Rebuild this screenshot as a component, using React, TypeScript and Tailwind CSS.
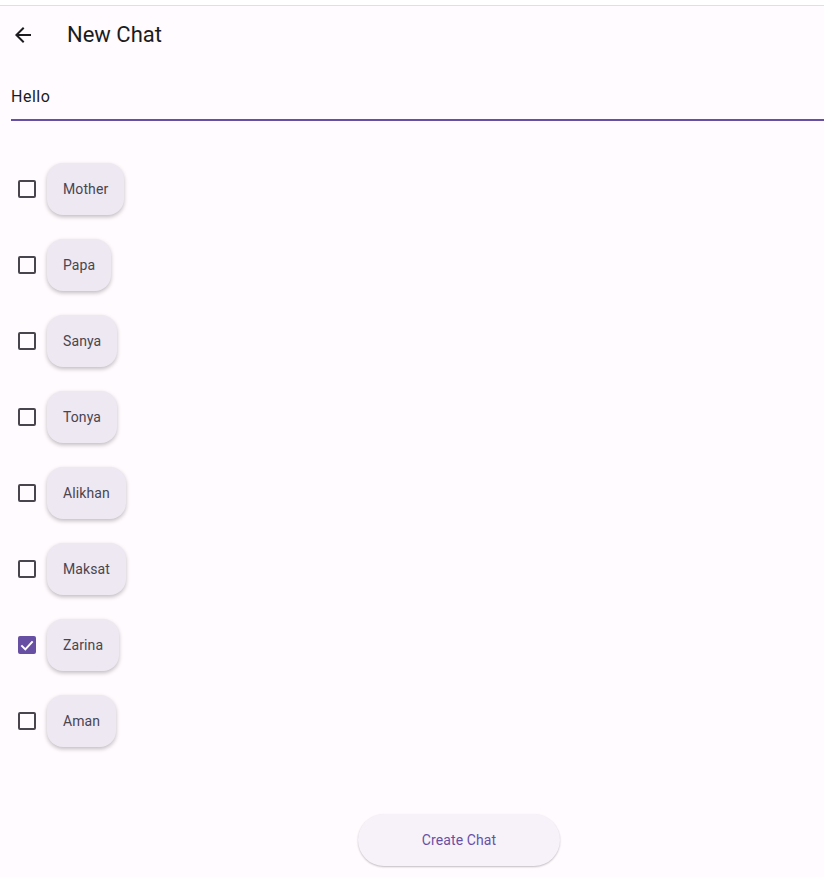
import { useState } from 'react'

const contacts = ['Mother', 'Papa', 'Sanya', 'Tonya', 'Alikhan', 'Maksat', 'Zarina', 'Aman']

function ArrowBack() {
  return (
    <svg width="24" height="24" viewBox="0 0 24 24" fill="currentColor">
      <path d="M20 11H7.83l5.59-5.59L12 4l-8 8 8 8 1.41-1.41L7.83 13H20v-2z" />
    </svg>
  )
}

function Check({ checked, onToggle }: { checked: boolean; onToggle: () => void }) {
  return (
    <button onClick={onToggle} className="w-[18px] h-[18px] flex items-center justify-center shrink-0">
      {checked ? (
        <span className="w-[18px] h-[18px] rounded-[2px] bg-[#6750a4] flex items-center justify-center">
          <svg width="16" height="16" viewBox="0 0 24 24" fill="none" stroke="white" strokeWidth="3">
            <polyline points="3.5 12.5 9.5 18.5 20.5 6.5" />
          </svg>
        </span>
      ) : (
        <span className="w-[18px] h-[18px] rounded-[2px] border-2 border-[#49454f]" />
      )}
    </button>
  )
}

export default function App() {
  const [selected, setSelected] = useState<string[]>(['Zarina'])
  const [name, setName] = useState('Hello')

  const toggle = (c: string) =>
    setSelected((s) => (s.includes(c) ? s.filter((x) => x !== c) : [...s, c]))

  return (
    <div className="w-[824px] h-[877px] bg-[#fffbfe] flex flex-col overflow-hidden" style={{ fontFamily: 'Roboto, "Noto Sans", sans-serif' }}>
      <div className="h-[6px] bg-white border-b border-[#e0e0e0] shrink-0" />

      {/* App bar */}
      <div className="h-[56px] mt-[1px] flex items-center pl-[11px] text-[#1c1b1f]">
        <ArrowBack />
        <span className="ml-[32px] text-[22px] leading-7">New Chat</span>
      </div>

      {/* Chat name field */}
      <div className="pl-[11px] pt-[22px]">
        <input
          value={name}
          onChange={(e) => setName(e.target.value)}
          className="w-full bg-transparent outline-none text-base text-[#1c1b1f] tracking-[0.5px] pb-[10px] border-b-2 border-[#6750a4]"
        />
      </div>

      {/* Contacts */}
      <div className="flex flex-col pt-[42px] gap-[24px]">
        {contacts.map((c) => (
          <div key={c} className="flex items-center h-[52px] pl-[18px]">
            <Check checked={selected.includes(c)} onToggle={() => toggle(c)} />
            <button
              onClick={() => toggle(c)}
              className="ml-[11px] h-[52px] px-[16px] rounded-[16px] bg-[#eee8f2] text-sm text-[#49454f] tracking-[0.1px] shadow-[0_2px_4px_rgba(0,0,0,0.25)]"
            >
              {c}
            </button>
          </div>
        ))}
      </div>

      <div className="flex-1" />

      <div className="flex justify-center pb-[11px] pl-[94px]">
        <button className="w-[202px] h-[52px] rounded-full bg-[#f7f2fa] text-sm text-[#6750a4] tracking-[0.1px] shadow-[0_1px_2px_rgba(0,0,0,0.25)]">
          Create Chat
        </button>
      </div>
    </div>
  )
}
